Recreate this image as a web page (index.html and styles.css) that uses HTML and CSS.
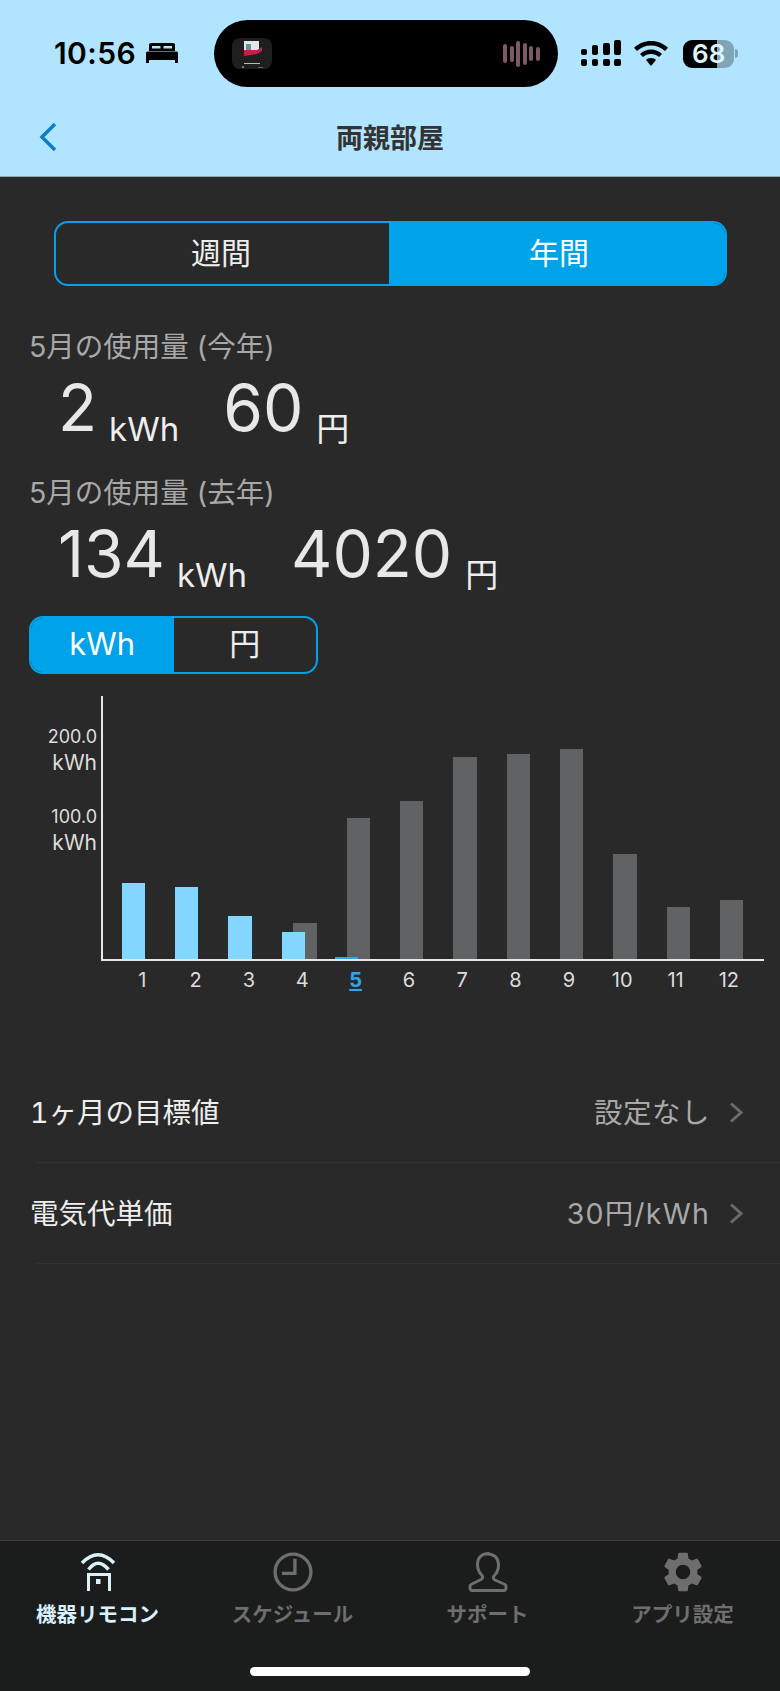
FILE: index.html
```html
<!DOCTYPE html>
<html lang="ja">
<head>
    <meta charset="UTF-8">
    <meta name="viewport" content="width=device-width, initial-scale=1.0">
    <title>両親部屋</title>
    <link rel="stylesheet" href="styles.css">
</head>
<body>
<div class="page">
    <header class="top">
        <div class="status">
            <div class="status-left">
                <span class="time">10:56</span>
                <svg class="bed" viewBox="0 0 32 20"><path fill-rule="evenodd" d="M5 0h22a2 2 0 0 1 2 2v6H3V2a2 2 0 0 1 2-2zM6 3v2.500h8.500V3zM17.500 3v2.500H26V3z M1.500 8.500h29a1.500 1.500 0 0 1 1.500 1.500v10h-3v-3H3v3H0V10a1.500 1.500 0 0 1 1.500-1.500z" fill="#000"/></svg>
            </div>
            <div class="island">
                <svg class="art" viewBox="0 0 40 31">
                    <rect width="40" height="31" rx="8" fill="#1f1f1f"/>
                    <rect x="12" y="3" width="15" height="9" fill="#dfe8e8"/>
                    <rect x="14" y="6" width="5" height="7" fill="#6f8f95"/>
                    <path d="M12 12h13l5-3v4l-5 3-13 2z" fill="#c3204a"/>
                    <rect x="12" y="25" width="16" height="1" fill="#bbb"/>
                    <rect x="10" y="28" width="2" height="2" fill="#777"/>
                    <rect x="26" y="29" width="5" height="1" fill="#666"/>
                </svg>
                <div class="wave">
                    <i class="w1"></i><i class="w2"></i><i class="w3"></i><i class="w4"></i><i class="w5"></i><i class="w6"></i>
                </div>
            </div>
            <div class="status-right">
                <svg class="signal" viewBox="0 0 40 27" fill="#000">
                    <rect x="0" y="9" width="6" height="6" rx="2"/><rect x="11" y="5" width="6" height="10" rx="2"/><rect x="22" y="3" width="7" height="12" rx="2"/><rect x="33" y="0" width="7" height="15" rx="2"/>
                    <rect x="0" y="19" width="6" height="7" rx="2"/><rect x="11" y="19" width="6" height="7" rx="2"/><rect x="22" y="19" width="7" height="7" rx="2"/><rect x="33" y="19" width="7" height="7" rx="2"/>
                </svg>
                <svg class="wifi" viewBox="0 0 34 25" fill="#000">
                    <path d="M17 0c6.500 0 12.500 2.500 17 6.800l-3 3.200C27.300 6.400 22.400 4.400 17 4.400S6.700 6.400 3 10L0 6.800C4.500 2.500 10.500 0 17 0z"/>
                    <path d="M17 8.600c4.200 0 8 1.600 11 4.300l-3 3.200c-2.100-1.900-5-3.100-8-3.100s-5.900 1.200-8 3.100l-3-3.200c3-2.700 6.800-4.300 11-4.300z"/>
                    <path d="M17 17c1.900 0 3.700.700 5 1.900L17 25l-5-6.100c1.300-1.200 3.100-1.900 5-1.900z"/>
                </svg>
                <div class="battery">
                    <div class="battery-body"><span class="battery-num">68</span></div>
                    <div class="battery-tip"></div>
                </div>
            </div>
        </div>
        <nav class="nav">
            <svg class="back" viewBox="0 0 18 30"><path d="M16 2L3 15l13 13" fill="none" stroke="#0a7fc8" stroke-width="3.500"/></svg>
            <h1 class="title">両親部屋</h1>
        </nav>
    </header>

    <main class="content">
        <div class="seg">
            <div class="seg-item left">週間</div>
            <div class="seg-item on">年間</div>
        </div>

        <div class="label first">5月の使用量 (今年)</div>
        <div class="values"><span class="num">2</span><span class="unit">kWh</span><span class="num money">60</span><span class="unit yen">円</span></div>

        <div class="label">5月の使用量 (去年)</div>
        <div class="values"><span class="num">134</span><span class="unit">kWh</span><span class="num money">4020</span><span class="unit yen">円</span></div>

        <div class="unit-toggle">
            <div class="unit-item on">kWh</div>
            <div class="unit-item">円</div>
        </div>

        <section class="chart">
            <div class="chart-main">
                <div class="y-axis">
                    <div class="y-num">200.0</div>
                    <div class="y-unit">kWh</div>
                    <div class="y-num second">100.0</div>
                    <div class="y-unit">kWh</div>
                </div>
                <div class="plot">
                    <div class="slot"><div class="bar now" style="height:76px"></div></div>
                    <div class="slot"><div class="bar now" style="height:72px"></div></div>
                    <div class="slot"><div class="bar now" style="height:43px"></div></div>
                    <div class="slot"><div class="bar last" style="height:36px"></div><div class="bar now" style="height:27px"></div></div>
                    <div class="slot"><div class="bar last" style="height:141px"></div><div class="bar now current" style="height:2px"></div></div>
                    <div class="slot"><div class="bar last" style="height:158px"></div></div>
                    <div class="slot"><div class="bar last" style="height:202px"></div></div>
                    <div class="slot"><div class="bar last" style="height:205px"></div></div>
                    <div class="slot"><div class="bar last" style="height:210px"></div></div>
                    <div class="slot"><div class="bar last" style="height:105px"></div></div>
                    <div class="slot"><div class="bar last" style="height:52px"></div></div>
                    <div class="slot"><div class="bar last" style="height:59px"></div></div>
                </div>
            </div>
            <div class="months">
                <span>1</span><span>2</span><span>3</span><span>4</span><span class="this-month">5</span><span>6</span><span>7</span><span>8</span><span>9</span><span>10</span><span>11</span><span>12</span>
            </div>
        </section>

        <div class="list">
            <div class="row">
                <span class="row-name">1ヶ月の目標値</span>
                <span class="row-value">設定なし</span>
                <svg class="chev" viewBox="0 0 15 21"><path d="M2 1.500l10 9-10 9" fill="none" stroke="#6b6b6b" stroke-width="3"/></svg>
            </div>
            <div class="row">
                <span class="row-name">電気代単価</span>
                <span class="row-value wide">30円/kWh</span>
                <svg class="chev" viewBox="0 0 15 21"><path d="M2 1.500l10 9-10 9" fill="none" stroke="#6b6b6b" stroke-width="3"/></svg>
            </div>
        </div>
    </main>

    <footer class="tabbar">
        <div class="tabs">
            <div class="tab active">
                <svg class="tab-icon" viewBox="0 0 40 40" fill="none" stroke="#d8f1fb" stroke-width="3.500">
                    <path d="M4 11Q20 -5.500 36 11"/>
                    <path d="M10.500 17.500Q20 5 30.500 17.500"/>
                    <path d="M10.500 39V22.500h21V39" stroke-width="3"/>
                    <rect x="18" y="27" width="4.500" height="5" fill="#d8f1fb" stroke="none"/>
                </svg>
                <span>機器リモコン</span>
            </div>
            <div class="tab">
                <svg class="tab-icon" viewBox="0 0 42 42" fill="none" stroke="#6e6e6e" stroke-width="3.500">
                    <circle cx="21" cy="21" r="18.800"/>
                    <path d="M23 7v15.500H9.500"/>
                </svg>
                <span>スケジュール</span>
            </div>
            <div class="tab">
                <svg class="tab-icon" viewBox="0 0 40 40" fill="none" stroke="#6e6e6e" stroke-width="3">
                    <path d="M20 1.500c-6.500 0-10.500 4.500-10.500 11 0 5 2 8.500 4.500 11 1 1 1 3-1 4L3 32.500c-1.500.800-1.500 6 1 6h32c2.500 0 2.500-5.200 1-6l-10-4.500c-2-1-2-3-1-4 2.500-2.500 4.500-6 4.500-11 0-6.500-4-11-10.500-11z"/>
                </svg>
                <span>サポート</span>
            </div>
            <div class="tab">
                <svg class="tab-icon" viewBox="2.400 2 19.200 20"><path fill="#6e6e6e" d="M19.140 12.940c.04-.3.06-.61.06-.94 0-.32-.02-.64-.07-.94l2.030-1.580c.18-.14.23-.41.12-.61l-1.920-3.320c-.12-.22-.37-.29-.59-.22l-2.390.96c-.5-.38-1.030-.7-1.620-.94l-.36-2.540c-.04-.24-.24-.41-.48-.41h-3.840c-.24 0-.43.17-.47.41l-.36 2.540c-.59.24-1.130.57-1.620.94l-2.390-.96c-.22-.08-.47 0-.59.22L2.740 8.870c-.12.21-.08.47.12.61l2.030 1.580c-.05.3-.09.63-.09.94s.02.64.07.94l-2.030 1.580c-.18.14-.23.41-.12.61l1.920 3.320c.12.22.37.29.59.22l2.390-.96c.5.38 1.030.7 1.620.94l.36 2.540c.05.24.24.41.48.41h3.840c.24 0 .44-.17.47-.41l.36-2.540c.59-.24 1.130-.56 1.620-.94l2.390.96c.22.08.47 0 .59-.22l1.920-3.320c.12-.22.07-.47-.12-.61l-2.010-1.580zM12 15.600c-1.980 0-3.600-1.620-3.600-3.600s1.620-3.600 3.600-3.600 3.600 1.620 3.600 3.600-1.620 3.600-3.600 3.600z"/></svg>
                <span>アプリ設定</span>
            </div>
        </div>
        <div class="home-bar"></div>
    </footer>
</div>
</body>
</html>
```
FILE: styles.css
```css
* {
    box-sizing: border-box;
}

body {
    margin: 0;
    background: #292929;
    font-family: Inter, "Noto Sans CJK JP", sans-serif;
    color: #eee;
}

.page {
    width: 780px;
    height: 1691px;
    display: flex;
    flex-direction: column;
    overflow: hidden;
}

/* status bar + nav */
.top {
    height: 177px;
    padding-top: 20px;
    background: #b1e5ff;
    border-bottom: 1px solid #8fa9b5;
}

.status {
    display: flex;
    align-items: center;
    height: 67px;
    padding-left: 54px;
}

.status-left {
    width: 160px;
    display: flex;
    align-items: center;
    gap: 10px;
    padding-bottom: 2px;
}

.time {
    font-size: 30px;
    font-weight: 600;
    color: #000;
    letter-spacing: 0.4px;
}

.bed {
    width: 32px;
    height: 20px;
}

.island {
    width: 344px;
    height: 67px;
    border-radius: 34px;
    background: #000;
    display: flex;
    align-items: center;
    justify-content: space-between;
    padding: 0 18px;
}

.art {
    width: 40px;
    height: 31px;
}

.wave {
    display: flex;
    align-items: center;
    gap: 2.6px;
}

.wave i {
    width: 4px;
    border-radius: 2px;
    background: #7a5b63;
}

.w1 { height: 19px; }
.w2 { height: 16px; }
.w3 { height: 26px; }
.w4 { height: 22px; }
.w5 { height: 15px; }
.w6 { height: 14px; }

.status-right {
    display: flex;
    align-items: center;
    margin-left: 23px;
}

.signal {
    width: 40px;
    height: 27px;
}

.wifi {
    width: 34px;
    height: 25px;
    margin-left: 13px;
}

.battery {
    display: flex;
    align-items: center;
    margin-left: 15px;
}

.battery-body {
    width: 51px;
    height: 28px;
    border-radius: 9px;
    background: linear-gradient(to right, #000 34px, #7fa5b8 34px);
    display: flex;
    align-items: center;
    padding-left: 9px;
}

.battery-num {
    font-size: 26px;
    font-weight: 600;
    color: #dff3fc;
}

.battery-tip {
    width: 3px;
    height: 9px;
    margin-left: 1px;
    border-radius: 0 3px 3px 0;
    background: #7fa5b8;
}

.nav {
    display: grid;
    grid-template-columns: 1fr auto 1fr;
    align-items: center;
    height: 89px;
    padding-top: 10px;
}

.back {
    width: 18px;
    height: 30px;
    margin-left: 39px;
}

.title {
    margin: 0;
    font-size: 27px;
    font-weight: 700;
    color: #333;
}

/* main */
.content {
    flex: 1;
    display: flex;
    flex-direction: column;
}

.seg {
    display: flex;
    margin: 44px 53px 0 54px;
    height: 65px;
    border: 2px solid #00a2ea;
    border-radius: 14px;
    overflow: hidden;
}

.seg-item {
    flex: 1;
    padding-left: 4px;
    text-align: center;
    font-size: 30px;
    line-height: 61px;
}

.seg-item.left {
    flex: none;
    width: 333px;
    padding: 0 3px 0 0;
}

.seg-item.on {
    background: #00a2ea;
    color: #fff;
}

.label {
    margin-left: 29px;
    font-size: 28.5px;
    line-height: 40px;
    color: #a8a8a8;
}

.label.first {
    margin-top: 41px;
}

.values {
    height: 106px;
    padding: 6px 0 0 58px;
    line-height: 70px;
    white-space: nowrap;
}

.num {
    font-size: 64px;
    color: #e8e8e8;
}

.unit {
    font-size: 33px;
    vertical-align: -10px;
    margin-left: 12px;
}

.unit.yen {
    margin-left: 13px;
}

.money {
    margin-left: 44px;
}

.unit-toggle {
    display: flex;
    width: 289px;
    height: 58px;
    margin: -3px 0 0 29px;
    border: 2px solid #00a2ea;
    border-radius: 14px;
    overflow: hidden;
}

.unit-item {
    flex: 1;
    text-align: center;
    font-size: 31px;
    line-height: 52px;
}

.unit-item.on {
    background: #00a2ea;
    color: #fff;
}

/* chart */
.chart {
    margin-top: 22px;
}

.chart-main {
    display: flex;
    height: 265px;
}

.y-axis {
    width: 101px;
    padding: 28px 4px 0 0;
    text-align: right;
    color: #ddd;
}

.y-num {
    font-size: 18px;
    line-height: 26px;
}

.y-unit {
    font-size: 21px;
    line-height: 26px;
}

.y-num.second {
    margin-top: 28px;
}

.plot {
    width: 663px;
    display: flex;
    padding-left: 12.600px;
    border-left: 2px solid #e6e6e6;
    border-bottom: 2px solid #e6e6e6;
}

.slot {
    width: 53.330px;
    display: grid;
    align-items: end;
    justify-items: start;
}

.bar {
    grid-area: 1 / 1;
    width: 23.300px;
}

.bar.now {
    margin-left: 6px;
    background: #82d6ff;
}

.bar.now.current {
    background: #2ea6ee;
}

.bar.last {
    margin-left: 17.700px;
    background: #616263;
}

.months {
    display: flex;
    padding: 5px 0 0 115.600px;
}

.months span {
    width: 53.330px;
    text-align: center;
    font-size: 20px;
    line-height: 28px;
    color: #ddd;
}

.months .this-month {
    color: #2ea6ee;
    font-weight: 700;
    text-decoration: underline;
    text-underline-offset: 2px;
}

/* list */
.list {
    margin-top: 68px;
}

.row {
    display: flex;
    align-items: center;
    height: 101px;
    margin-left: 36px;
    padding-right: 36px;
    border-bottom: 1px solid #323232;
}

.row-name {
    margin: 0 0 3px -6px;
    font-size: 28.5px;
    font-variant-numeric: tabular-nums;
    color: #eee;
}

.row-value {
    margin: 0 0 3px auto;
    font-size: 28.5px;
    letter-spacing: 0.5px;
    color: #a8a8a8;
}

.row-value.wide {
    letter-spacing: 1.2px;
}

.chev {
    width: 15px;
    height: 21px;
    margin-left: 19px;
}

/* bottom tabs */
.tabbar {
    height: 151px;
    flex-shrink: 0;
    display: flex;
    flex-direction: column;
    align-items: center;
    background: #1b1c1c;
    border-top: 1px solid #383838;
}

.tabs {
    width: 100%;
    display: grid;
    grid-template-columns: repeat(4, 1fr);
    padding-top: 11px;
}

.tab {
    display: flex;
    flex-direction: column;
    align-items: center;
    font-size: 20.5px;
    font-weight: 700;
    line-height: 28px;
    color: #6e6e6e;
}

.tab.active {
    color: #d8f1fb;
}

.tab-icon {
    width: 40px;
    height: 40px;
    margin-bottom: 9px;
}

.home-bar {
    width: 280px;
    height: 9px;
    margin-top: auto;
    margin-bottom: 15px;
    border-radius: 5px;
    background: #fff;
}
```
